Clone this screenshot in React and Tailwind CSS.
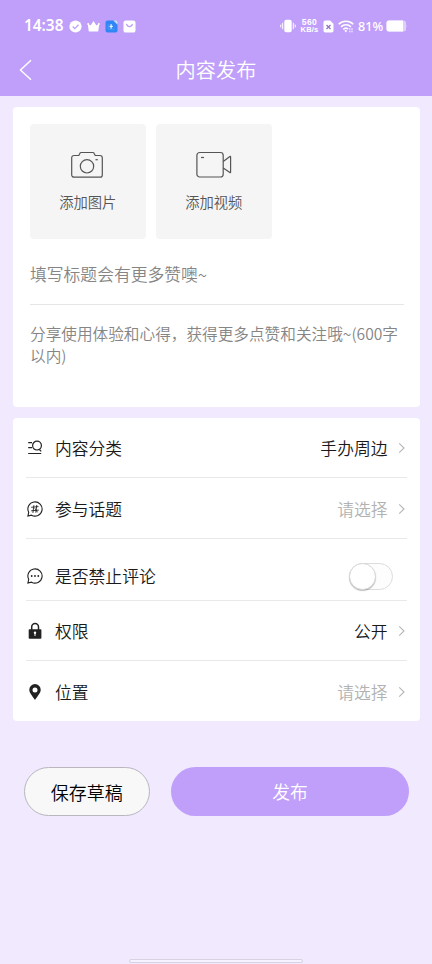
import React, { useState } from 'react';

const StatusBar = () => (
  <div className="flex h-[52px] items-center pl-[24px] pr-[24px] text-white">
    <span className="w-[40px] whitespace-nowrap font-['Noto_Sans'] text-[15.4px] font-semibold leading-4">14:38</span>
    <svg className="ml-[5px]" width="13" height="13" viewBox="0 0 13 13">
      <circle cx="6.5" cy="6.5" r="6.1" fill="#fff" />
      <path d="M3.7 6.5l2.1 2.1 3.8-3.8" fill="none" stroke="#bf9ffa" strokeWidth="1.3" />
    </svg>
    <svg className="ml-[5px]" width="13" height="13" viewBox="0 0 13 13">
      <path d="M.7 3.6L3.6 5.4 4.9 3.4 6.5 1l1.6 2.4 1.3 2 2.9-1.8-1.1 8H1.8z" fill="#fff" />
      <circle cx="1.2" cy="4" r=".9" fill="#fff" />
      <circle cx="11.8" cy="4" r=".9" fill="#fff" />
    </svg>
    <svg className="ml-[5px]" width="13" height="13" viewBox="0 0 13 13">
      <path d="M2.5.5h6.8l3.2 3.2v6.8a2 2 0 0 1-2 2h-8a2 2 0 0 1-2-2v-8a2 2 0 0 1 2-2z" fill="#2e87f5" />
      <path d="M8.3.5h2.2a2 2 0 0 1 2 2v2.2z" fill="#c9defc" />
      <path d="M3.2 4.2v5h6.2M6.1 4v5M4.3 6.3h3.8" fill="none" stroke="#64a8fa" strokeWidth=".6" />
      <path d="M6.1 4.1v4.6M4.6 6.4h3.2" stroke="#fff" strokeWidth="1" />
    </svg>
    <svg className="ml-[5px]" width="13" height="13" viewBox="0 0 13 13">
      <rect x=".5" y=".4" width="12" height="12.2" rx="2.2" fill="#fff" />
      <path d="M3.6 3.9c.4 3.5 5.4 3.5 5.8 0" fill="none" stroke="#bf9ffa" strokeWidth="1.2" />
    </svg>
    <div className="ml-auto flex items-center">
      <svg width="16" height="14" viewBox="0 0 16 14">
        <rect x="4.3" y=".8" width="7.4" height="12.4" rx="1.8" fill="#fff" />
        <path d="M2.7 3.8v6.4M13.3 3.8v6.4M.8 5.6v2.8M15.2 5.6v2.8" stroke="#fff" strokeWidth="1" />
      </svg>
      <div className="ml-[4px] flex w-[19px] flex-col items-center whitespace-nowrap font-['Liberation_Sans'] font-bold">
        <div className="text-[8.5px] leading-[8.5px] tracking-[0.5px]">560</div>
        <div className="text-[7.5px] leading-[8px] tracking-[0.2px]">KB/s</div>
      </div>
      <svg className="ml-[4px]" width="11" height="13" viewBox="0 0 11 13">
        <path d="M2.3.5h4.8l3.4 3.3v6.9a1.8 1.8 0 0 1-1.8 1.8H2.3a1.8 1.8 0 0 1-1.8-1.8V2.3A1.8 1.8 0 0 1 2.3.5z" fill="#fff" />
        <path d="M3.5 5l4 4M7.5 5l-4 4" stroke="#8e72c4" strokeWidth="1.3" />
      </svg>
      <svg className="ml-[4px]" width="16" height="13" viewBox="0 0 16 13">
        <g fill="none" stroke="#fff" strokeWidth="1.6">
          <path d="M.7 4.3c4-4.1 10.6-4.1 14.6 0" />
          <path d="M3 6.9c2.8-2.8 7.2-2.8 10 0" />
          <path d="M5.2 9.3c1.6-1.5 3.5-1.5 4.9-.3" />
        </g>
        <path d="M6.3 10.6q1.5-1 3 0L7.8 12.4z" fill="#fff" />
        <path d="M11.8 8.3v4M14 8.3v4" stroke="#fff" strokeWidth="1" strokeDasharray="1.6 .8" />
      </svg>
      <span className="ml-[4px] w-[26px] whitespace-nowrap pt-px font-['Noto_Sans'] text-[12.6px] font-medium leading-4">81%</span>
      <svg className="ml-[2px]" width="22" height="12" viewBox="0 0 22 12">
        <path d="M3 .5h14.5A2.5 2.5 0 0 1 20 3v6a2.5 2.5 0 0 1-2.5 2.5H3A2.5 2.5 0 0 1 .5 9V3A2.5 2.5 0 0 1 3 .5z" fill="#dfcffd" />
        <path d="M2.7.5H17v11H2.7A2.2 2.2 0 0 1 .5 9.3V2.7A2.2 2.2 0 0 1 2.7.5z" fill="#fff" />
        <path d="M20.5 4.2q1.3 1.8 0 3.6z" fill="#dfcffd" />
      </svg>
    </div>
  </div>
);

const CameraIcon = () => (
  <svg className="-ml-px" width="32" height="28" viewBox="0 0 32 28" fill="none" stroke="#555" strokeWidth="1.2">
    <path d="M3 4.5h4.8l1-2a1.5 1.5 0 0 1 1.4-1h11.6a1.5 1.5 0 0 1 1.4 1l1 2H29a2.3 2.3 0 0 1 2.3 2.3v17.1a2.3 2.3 0 0 1-2.3 2.3H3a2.3 2.3 0 0 1-2.3-2.3V6.800A2.300 2.300 0 0 1 3 4.500z" />
    <circle cx="16" cy="15.3" r="6.7" />
    <path d="M24.5 8.7h2.3" />
  </svg>
);

const VideoIcon = () => (
  <svg width="36" height="28" viewBox="0 0 36 28" fill="none" stroke="#555" strokeWidth="1.2">
    <rect x=".9" y="1.5" width="26.3" height="24.5" rx="2.8" />
    <path d="M27.2 10.5l6.7-5a.4.4 0 0 1 .7.3v15.400a.4.4 0 0 1-.7.3l-6.700-4.500" />
    <path d="M5 6.5h3" />
  </svg>
);

const CategoryIcon = () => (
  <svg width="16" height="16" viewBox="0 0 16 16" fill="none" stroke="#222" strokeWidth="1.2">
    <path d="M1.2 2.6H5M1.2 7.6H5M1.200 13.500h13" />
    <circle cx="10" cy="5.6" r="4.4" />
    <path d="M12.2 9.3l2 2" />
  </svg>
);

const TopicIcon = () => (
  <svg width="16" height="16" viewBox="0 0 16 16" fill="none" stroke="#222" strokeWidth="1.1">
    <path d="M1.7 11.3A7.1 7.1 0 1 1 4.5 14.2L.9 15.1z" />
    <path d="M4.200 6.300l7.300-.7M4.200 9.800l7.600-.7M6.900 4.200l-1 7.700M9.800 4l-1 7.700M7.900 7.300l2.600 4" strokeWidth=".9" />
  </svg>
);

const CommentIcon = () => (
  <svg width="16" height="16" viewBox="0 0 16 16">
    <path d="M1.7 11.3A7.1 7.1 0 1 1 4.5 14.2L.9 15.1z" fill="none" stroke="#222" strokeWidth="1.1" />
    <g fill="#222">
      <circle cx="4.7" cy="8" r=".9" />
      <circle cx="8" cy="8" r=".9" />
      <circle cx="11.3" cy="8" r=".9" />
    </g>
  </svg>
);

const LockIcon = () => (
  <svg width="16" height="18" viewBox="0 0 16 18">
    <path d="M4.7 8V5a3.4 3.4 0 0 1 6.8 0v3" fill="none" stroke="#222" strokeWidth="1.5" />
    <rect x="1.7" y="7.3" width="12.7" height="9.4" rx=".8" fill="#222" />
    <circle cx="8" cy="10.8" r="1.2" fill="#fff" />
    <path d="M8 11v3" stroke="#fff" strokeWidth="1" />
  </svg>
);

const PinIcon = () => (
  <svg width="16" height="18" viewBox="0 0 16 18">
    <path fillRule="evenodd" d="M8 1a5.700 5.700 0 0 1 5.700 5.700C13.700 10 10.600 12.800 8 17 5.400 12.800 2.300 10 2.300 6.700A5.700 5.700 0 0 1 8 1zm0 3.400a2.500 2.500 0 1 0 0 5 2.500 2.500 0 0 0 0-5z" fill="#222" />
  </svg>
);

const Chevron = () => (
  <svg className="ml-[10px]" width="8" height="12" viewBox="0 0 8 12" fill="none" stroke="#b5b5b5" strokeWidth="1.1">
    <path d="M1.2 1.3L6 6l-4.8 4.7" />
  </svg>
);

const UploadTile = ({ icon, label }) => (
  <button className="flex h-[115px] w-[115.5px] flex-col items-center rounded-[4px] bg-[#f5f5f5] pt-[27px]">
    {icon}
    <span className="mt-[13px] text-[14.3px] leading-5 text-[#555]">{label}</span>
  </button>
);

const Row = ({ icon, label, className, children }) => (
  <div className={`flex items-center border-[#e9e9eb] pl-px pr-[1.5px] ${className}`}>
    {icon}
    <span className="ml-[12px] text-[16.8px] leading-6 text-[#1a1a1a]">{label}</span>
    <div className="ml-auto flex items-center text-[16.8px] leading-6">{children}</div>
  </div>
);

const App = () => {
  const [banComment, setBanComment] = useState(false);

  return (
    <div className="flex h-[964px] w-[432px] flex-col overflow-hidden bg-[#f1e9fe] font-['Noto_Sans_CJK_SC',sans-serif] font-[350]">
      <header className="h-[96px] shrink-0 bg-[#bf9ffa]">
        <StatusBar />
        <div className="grid h-[36px] grid-cols-[60px_1fr_60px] items-center text-white">
          <svg className="ml-[19px]" width="14" height="22" viewBox="0 0 14 22" fill="none" stroke="#fff" strokeWidth="1.5">
            <path d="M12 1.3L1.5 11 12 20.7" />
          </svg>
          <h1 className="text-center text-[20.2px] leading-7">内容发布</h1>
        </div>
      </header>

      <section className="ml-[13px] mt-[11px] h-[300px] w-[407px] shrink-0 rounded-[4px] bg-white pl-[17px] pr-[16px] pt-[17px]">
        <div className="flex gap-[10.5px]">
          <UploadTile icon={<CameraIcon />} label="添加图片" />
          <UploadTile icon={<VideoIcon />} label="添加视频" />
        </div>
        <div className="mt-[10px] flex h-[56px] items-center border-b border-[#e6e6e8] pb-[5px] text-[16.8px] leading-6 text-[#858585]">
          填写标题会有更多赞噢~
        </div>
        <p className="-mr-2 mt-[18px] text-[15.65px] leading-[22px] text-[#858585]">
          分享使用体验和心得，获得更多点赞和关注哦~(600字<br />以内)
        </p>
      </section>

      <section className="ml-[13px] mt-[11px] h-[303px] w-[407px] shrink-0 rounded-[4px] bg-white px-[13px]">
        <Row icon={<CategoryIcon />} label="内容分类" className="h-[60px] border-b">
          <span className="text-[#1a1a1a]">手办周边</span>
          <Chevron />
        </Row>
        <Row icon={<TopicIcon />} label="参与话题" className="h-[61px] border-b pt-px">
          <span className="text-[#b2b2b2]">请选择</span>
          <Chevron />
        </Row>
        <Row icon={<CommentIcon />} label="是否禁止评论" className="h-[62px] border-b pt-[13px]">
          <button
            onClick={() => setBanComment(!banComment)}
            className={`mr-[13px] flex h-[27px] w-[44px] rounded-full border border-[#dcdcdc] bg-[#fdfdfd] ${banComment ? 'justify-end' : ''}`}
          >
            <span className="-ml-px -mt-px size-[27px] rounded-full border border-[#d8d8d8] bg-white shadow-[0_1px_1px_rgba(0,0,0,0.25)]" />
          </button>
        </Row>
        <Row icon={<LockIcon />} label="权限" className="h-[60px] border-b">
          <span className="text-[#1a1a1a]">公开</span>
          <Chevron />
        </Row>
        <Row icon={<PinIcon />} label="位置" className="h-[60px] pt-px">
          <span className="text-[#b2b2b2]">请选择</span>
          <Chevron />
        </Row>
      </section>

      <div className="mt-[46px] flex gap-[21.5px] pl-[24px]">
        <button className="h-[49px] w-[125.5px] rounded-full border border-[#b9b6be] bg-[#f8f8f8] pt-[2px] text-[18px] text-black">保存草稿</button>
        <button className="h-[49px] w-[238px] rounded-full bg-[#bf9ffa] text-[17.7px] text-white">发布</button>
      </div>

      <div className="mx-auto mt-auto mb-px h-[4px] w-[174px] rounded-[2px] border border-[#d8d2e2] bg-[#f7f2ff]" />
    </div>
  );
};

export default App;
